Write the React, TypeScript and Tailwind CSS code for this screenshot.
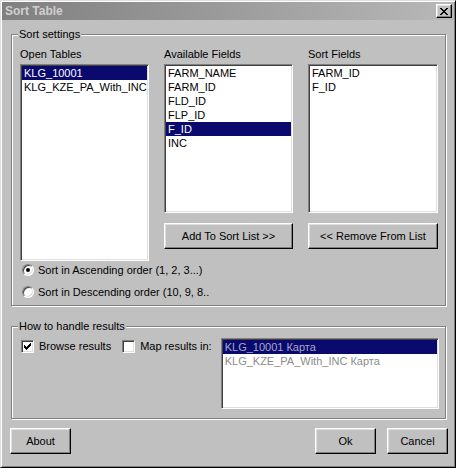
import React from "react";

const FONT = { fontFamily: '"Liberation Sans", Arial, sans-serif' };

const raised =
  "border border-t-white border-l-white border-r-black border-b-black shadow-[inset_-1px_-1px_0_#808080,inset_1px_1px_0_#dfdfdf] bg-[#c0c0c0]";
const sunken =
  "border border-t-[#808080] border-l-[#808080] border-r-white border-b-white shadow-[inset_1px_1px_0_#404040,inset_-1px_-1px_0_#dfdfdf] bg-white";

function Group({ title, className, children }: { title: string; className: string; children: React.ReactNode }) {
  return (
    <div className={`relative border border-[#808080] shadow-[1px_1px_0_#fff,inset_1px_1px_0_#fff] ${className}`}>
      <span className="absolute -top-[8px] left-[6px] px-[1px] bg-[#c0c0c0] leading-[14px]">{title}</span>
      {children}
    </div>
  );
}

function ListBox({ items, selected, className }: { items: string[]; selected?: number; className: string }) {
  return (
    <div className={`${sunken} p-[1px] ${className}`}>
      {items.map((it, i) => (
        <div
          key={it}
          className={`h-[14px] leading-[14px] px-[2px] whitespace-nowrap ${i === selected ? "bg-[#0a0a6e] text-white" : "text-black"}`}
        >
          {it}
        </div>
      ))}
    </div>
  );
}

function Button({ label, className }: { label: string; className: string }) {
  return (
    <button className={`${raised} h-[26px] flex items-center justify-center text-[11px] text-black ${className}`}>
      {label}
    </button>
  );
}

function Radio({ checked, label }: { checked?: boolean; label: string }) {
  return (
    <div className="flex items-center h-[16px] gap-[4px] ml-[2px]">
      <div className="w-[12px] h-[12px] rounded-full border border-t-[#808080] border-l-[#808080] border-r-white border-b-white shadow-[inset_1px_1px_0_#404040,inset_-1px_-1px_0_#dfdfdf] bg-white flex items-center justify-center">
        {checked && <div className="w-[4px] h-[4px] rounded-full bg-black" />}
      </div>
      <span>{label}</span>
    </div>
  );
}

function CheckBox({ checked }: { checked?: boolean }) {
  return (
    <div className={`w-[13px] h-[13px] ${sunken} flex items-center justify-center`}>
      {checked && (
        <svg width="7" height="7" viewBox="0 0 7 7" shapeRendering="crispEdges">
          <path d="M0 2h1v3H0zM1 3h1v3H1zM2 4h1v3H2zM3 3h1v3H3zM4 2h1v3H4zM5 1h1v3H5zM6 0h1v3H6z" fill="#000" />
        </svg>
      )}
    </div>
  );
}

export default function App() {
  return (
    <div
      style={FONT}
      className="w-[456px] h-[468px] bg-[#c0c0c0] border border-t-[#dfdfdf] border-l-[#dfdfdf] border-r-black border-b-black shadow-[inset_1px_1px_0_#fff,inset_-1px_-1px_0_#808080] p-[1px] flex flex-col text-[11px] text-black"
    >
      {/* Title bar */}
      <div className="h-[18px] flex items-center justify-between pl-[3px] pr-[2px] bg-linear-to-r from-[#808080] to-[#b8b8b8]">
        <span className="font-bold text-[12px] text-[#d0d0d0]">Sort Table</span>
        <div className={`w-[16px] h-[14px] ${raised} flex items-center justify-center`}>
          <svg width="8" height="7" viewBox="0 0 8 7" shapeRendering="crispEdges">
            <path d="M0 0h2v1H0zM6 0h2v1H6zM1 1h2v1H1zM5 1h2v1H5zM2 2h4v1H2zM3 3h2v1H3zM2 4h4v1H2zM1 5h2v1H1zM5 5h2v1H5zM0 6h2v1H0zM6 6h2v1H6z" fill="#000" />
          </svg>
        </div>
      </div>

      {/* Body */}
      <div className="flex flex-col pl-[8px] pr-[6px] pt-[14px]">
        <Group title="Sort settings" className="ml-[1px] mr-[2px] h-[272px] pl-[8px] pt-[12px]">
          <div className="flex gap-[15px]">
            <div className="w-[129px] flex flex-col">
              <div className="h-[14px] leading-[14px]">Open Tables</div>
              <ListBox className="mt-[3px] h-[197px]" items={["KLG_10001", "KLG_KZE_PA_With_INC"]} selected={0} />
            </div>
            <div className="w-[129px] flex flex-col">
              <div className="h-[14px] leading-[14px]">Available Fields</div>
              <ListBox
                className="mt-[3px] h-[149px]"
                items={["FARM_NAME", "FARM_ID", "FLD_ID", "FLP_ID", "F_ID", "INC"]}
                selected={4}
              />
              <Button label="Add To Sort List >>" className="mt-[10px] w-full" />
            </div>
            <div className="w-[130px] flex flex-col">
              <div className="h-[14px] leading-[14px]">Sort Fields</div>
              <ListBox className="mt-[3px] h-[149px]" items={["FARM_ID", "F_ID"]} />
              <Button label="<< Remove From List" className="mt-[10px] w-full" />
            </div>
          </div>
          <div className="mt-[1px]">
            <Radio checked label="Sort in Ascending order (1, 2, 3...)" />
          </div>
          <div className="mt-[6px]">
            <Radio label="Sort in Descending order (10, 9, 8.." />
          </div>
        </Group>

        <Group title="How to handle results" className="ml-[1px] mr-[2px] mt-[20px] h-[93px] pl-[8px] pt-[11px]">
          <div className="flex items-start">
            <div className="flex items-center h-[13px] mt-[2px] ml-[1px]">
              <CheckBox checked />
              <span className="ml-[5px]">Browse results</span>
              <div className="ml-[11px]">
                <CheckBox />
              </div>
              <span className="ml-[5px]">Map results in:</span>
            </div>
            <div className={`${sunken} p-[1px] ml-[9px] w-[218px] h-[71px]`}>
              <div className="h-[14px] leading-[14px] px-[2px] bg-[#0a0a6e] text-[#a8a8c4]">KLG_10001 Карта</div>
              <div className="h-[14px] leading-[14px] px-[2px] text-[#8c8c8c]">KLG_KZE_PA_With_INC Карта</div>
            </div>
          </div>
        </Group>

        {/* Buttons */}
        <div className="flex items-center mt-[9px]">
          <Button label="About" className="w-[61px]" />
          <div className="flex-1" />
          <Button label="Ok" className="w-[61px]" />
          <Button label="Cancel" className="w-[61px] ml-[11px]" />
        </div>
      </div>
    </div>
  );
}
